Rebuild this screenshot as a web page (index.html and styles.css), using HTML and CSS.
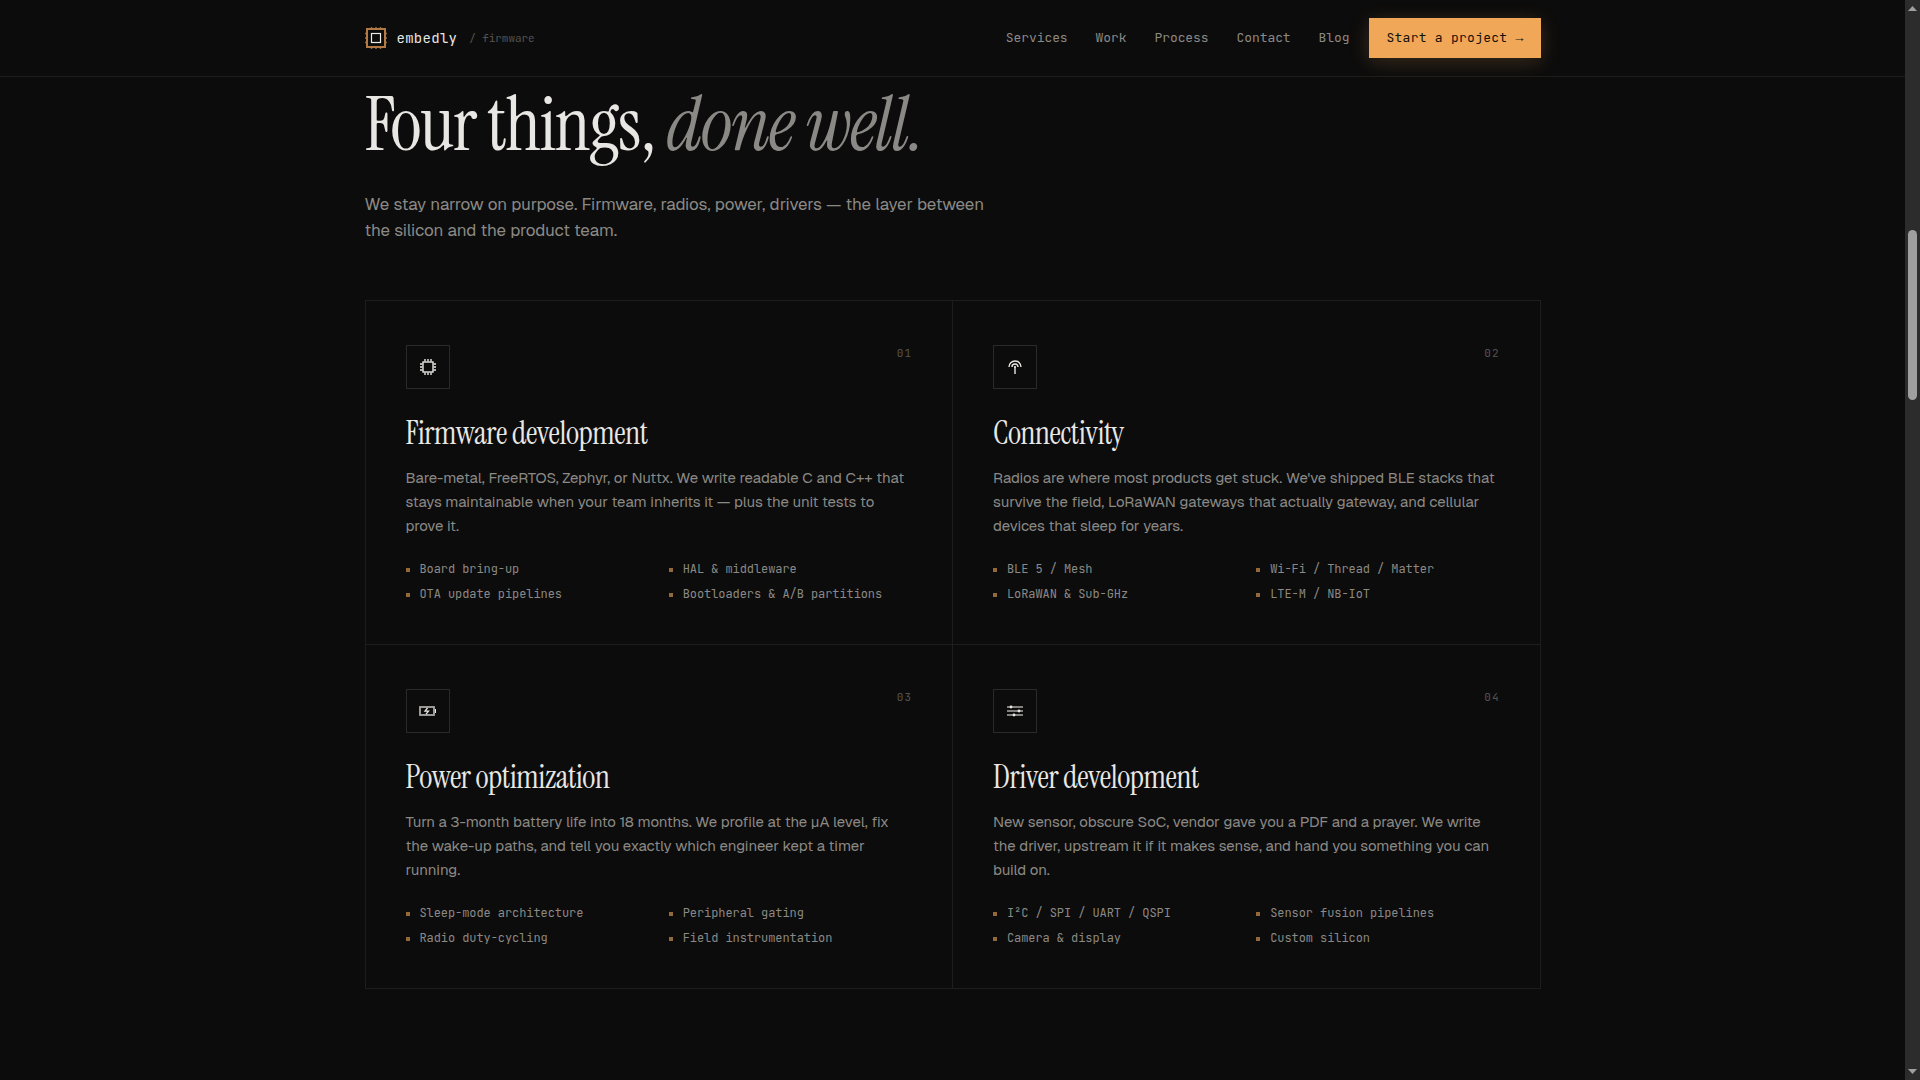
FILE: index.html
```html
<!DOCTYPE html>
<html lang="en">
<head>
  <meta charset="utf-8">
  <meta name="viewport" content="width=device-width, initial-scale=1">
  <title>embedly / firmware</title>
  <link rel="stylesheet" href="styles.css">
</head>
<body>
  <div class="page">
    <header class="topbar">
      <div class="wrap topbar-row">
        <a class="brand" href="#top">
          <svg class="brand-mark" viewBox="0 0 22 22" fill="none" aria-hidden="true">
            <rect x="2" y="2" width="18" height="18" stroke="#b47a45" stroke-width="2"/>
            <rect x="6.500" y="6.500" width="9" height="9" stroke="#ecebe8" stroke-width="1.200"/>
            <path d="M6.500 0v1M11 0v1M15.500 0v1M6.500 21v1M11 21v1M15.500 21v1M0 6.500h1M0 11h1M0 15.500h1M21 6.500h1M21 11h1M21 15.500h1" stroke="#8d6a48" stroke-width="1.500"/>
          </svg>
          <span class="brand-name">embedly</span>
          <span class="brand-sub">/ firmware</span>
        </a>
        <div class="topbar-end">
          <nav class="nav" aria-label="Main">
            <a href="#services">Services</a>
            <a href="#work">Work</a>
            <a href="#process">Process</a>
            <a href="#contact">Contact</a>
            <a href="#blog">Blog</a>
          </nav>
          <button class="cta" type="button">Start a project <span class="arrow">→</span></button>
        </div>
      </div>
    </header>

    <main class="wrap services" id="services">
      <h2 class="headline">Four things, <em>done well.</em></h2>
      <p class="lead">We stay narrow on purpose. Firmware, radios, power, drivers — the layer between the silicon and the product team.</p>

      <div class="grid">
        <article class="card">
          <div class="card-top">
            <span class="icon">
              <svg viewBox="0 0 18 18" fill="none" stroke="currentColor" aria-hidden="true">
                <rect x="4" y="4" width="10" height="10" stroke-width="1.400"/>
                <path d="M6 1v2.500M9 1v2.500M12 1v2.500M6 14.500V17M9 14.500V17M12 14.500V17M1 6h2.500M1 9h2.500M1 12h2.500M14.500 6H17M14.500 9H17M14.500 12H17" stroke-width="1.400"/>
              </svg>
            </span>
            <span class="num">01</span>
          </div>
          <h3>Firmware development</h3>
          <p>Bare-metal, FreeRTOS, Zephyr, or Nuttx. We write readable C and C++ that stays maintainable when your team inherits it — plus the unit tests to prove it.</p>
          <ul>
            <li>Board bring-up</li>
            <li>HAL &amp; middleware</li>
            <li>OTA update pipelines</li>
            <li>Bootloaders &amp; A/B partitions</li>
          </ul>
        </article>

        <article class="card">
          <div class="card-top">
            <span class="icon">
              <svg viewBox="0 0 18 18" fill="none" stroke="currentColor" aria-hidden="true">
                <path d="M3 9a6 6 0 0 1 12 0M6 9a3 3 0 0 1 6 0" stroke-width="1.400"/>
                <path d="M9 8.500V16" stroke-width="1.400"/>
                <circle cx="9" cy="9" r="1" fill="currentColor" stroke="none"/>
              </svg>
            </span>
            <span class="num">02</span>
          </div>
          <h3>Connectivity</h3>
          <p>Radios are where most products get stuck. We've shipped BLE stacks that survive the field, LoRaWAN gateways that actually gateway, and cellular devices that sleep for years.</p>
          <ul>
            <li>BLE 5 / Mesh</li>
            <li>Wi-Fi / Thread / Matter</li>
            <li>LoRaWAN &amp; Sub-GHz</li>
            <li>LTE-M / NB-IoT</li>
          </ul>
        </article>

        <article class="card">
          <div class="card-top">
            <span class="icon">
              <svg viewBox="0 0 18 18" fill="none" aria-hidden="true">
                <rect x="1" y="5" width="14" height="8" stroke="#a9a8a6" stroke-width="1.800"/>
                <path d="M16 7h1v4h-1z" fill="currentColor"/>
                <path d="M8.500 6L6 9.200H9.500L7 12.200" stroke="currentColor" stroke-width="1.300"/>
              </svg>
            </span>
            <span class="num">03</span>
          </div>
          <h3>Power optimization</h3>
          <p>Turn a 3-month battery life into 18 months. We profile at the µA level, fix the wake-up paths, and tell you exactly which engineer kept a timer running.</p>
          <ul>
            <li>Sleep-mode architecture</li>
            <li>Peripheral gating</li>
            <li>Radio duty-cycling</li>
            <li>Field instrumentation</li>
          </ul>
        </article>

        <article class="card">
          <div class="card-top">
            <span class="icon">
              <svg viewBox="0 0 18 18" fill="none" aria-hidden="true">
                <path d="M1 5h16M1 9h16M1 13h16" stroke="#a9a8a6" stroke-width="1.600"/>
                <circle cx="5" cy="5" r="1.400" fill="currentColor"/>
                <circle cx="13" cy="9" r="1.400" fill="currentColor"/>
                <circle cx="8" cy="13" r="1.400" fill="currentColor"/>
              </svg>
            </span>
            <span class="num">04</span>
          </div>
          <h3>Driver development</h3>
          <p>New sensor, obscure SoC, vendor gave you a PDF and a prayer. We write the driver, upstream it if it makes sense, and hand you something you can build on.</p>
          <ul>
            <li>I²C / SPI / UART / QSPI</li>
            <li>Sensor fusion pipelines</li>
            <li>Camera &amp; display</li>
            <li>Custom silicon</li>
          </ul>
        </article>
      </div>
    </main>
  </div>

  <div class="scrollbar" aria-hidden="true">
    <svg viewBox="0 0 9 5"><path d="M4.500 0L9 5H0z" fill="#a0a0a0"/></svg>
    <div class="track"><div class="thumb"></div></div>
    <svg viewBox="0 0 9 5"><path d="M0 0h9L4.500 5z" fill="#a0a0a0"/></svg>
  </div>
</body>
</html>
```
FILE: styles.css
```css
:root {
  --bg: #0c0c0c;
  --line: #1d1d1d;
  --line-strong: #2a2a2a;
  --text: #e8e7e4;
  --muted: #8b8985;
  --faint: #555452;
  --amber: #f0a858;
  --serif: "Instrument Serif", "Liberation Serif", serif;
  --sans: "Geist", "Inter", sans-serif;
  --mono: "JetBrains Mono", "Liberation Mono", monospace;
}

* {
  box-sizing: border-box;
}

body {
  margin: 0;
  display: grid;
  grid-template-columns: minmax(0, 1fr) 15px;
  min-height: 100vh;
  background: var(--bg);
  color: var(--text);
  font-family: var(--sans);
  letter-spacing: -0.005em;
}

.wrap {
  width: 100%;
  max-width: 1240px;
  margin: 0 auto;
  padding: 0 32px;
}

a {
  color: inherit;
  text-decoration: none;
}

/* Header */
.topbar {
  position: sticky;
  top: 0;
  background: var(--bg);
  border-bottom: 1px solid var(--line);
}

.topbar-row,
.topbar-end,
.nav,
.brand {
  display: flex;
  align-items: center;
}

.topbar-row {
  justify-content: space-between;
  min-height: 76px;
}

.brand {
  font-family: var(--mono);
}

.brand-mark {
  width: 22px;
  height: 22px;
}

.brand-name {
  margin: 0 12px 0 10px;
  font-size: 14px;
  line-height: 20px;
  letter-spacing: 0.02em;
}

.brand-sub {
  font-size: 11px;
  line-height: 20px;
  color: var(--faint);
}

.topbar-end {
  gap: 20px;
}

.nav {
  gap: 28px;
  font-family: var(--mono);
  font-size: 13px;
  line-height: 20px;
  color: var(--muted);
}

.cta {
  height: 40px;
  padding: 0 17px;
  border: 0;
  background: var(--amber);
  color: #14100a;
  font-family: var(--mono);
  font-size: 13px;
  line-height: 20px;
  letter-spacing: 0.02em;
  box-shadow: 0 4px 20px rgba(240, 168, 88, 0.2);
  cursor: pointer;
}

.arrow {
  font-family: "Liberation Mono", monospace;
}

/* Services */
.services {
  padding-top: 12px;
  padding-bottom: 80px;
}

.headline {
  margin: 0;
  font-family: var(--serif);
  font-size: 76px;
  font-weight: 400;
  line-height: 72px;
  letter-spacing: -0.02em;
}

.headline em {
  color: var(--muted);
}

.lead {
  max-width: 640px;
  margin: 30px 0 57px;
  font-size: 17px;
  line-height: 26px;
  color: var(--muted);
}

.grid {
  display: grid;
  grid-template-columns: repeat(2, minmax(0, 1fr));
  gap: 1px;
  border: 1px solid var(--line);
  background: var(--line);
}

.card {
  padding: 44px 40px 41px;
  background: var(--bg);
}

.card-top {
  display: flex;
  justify-content: space-between;
  align-items: flex-start;
}

.icon {
  display: grid;
  place-items: center;
  width: 44px;
  height: 44px;
  border: 1px solid var(--line-strong);
}

.icon svg {
  width: 18px;
  height: 18px;
}

.num {
  font-family: var(--mono);
  font-size: 11px;
  line-height: 17px;
  letter-spacing: 1px;
  color: var(--faint);
}

.card h3 {
  margin: 28px 0 17px;
  font-family: var(--serif);
  font-size: 32px;
  font-weight: 400;
  line-height: 32px;
  letter-spacing: -0.015em;
}

.card p {
  margin: 0 0 23px;
  font-size: 15px;
  line-height: 24px;
  color: var(--muted);
}

.card ul {
  display: grid;
  grid-template-columns: repeat(2, minmax(0, 1fr));
  gap: 8px 20px;
  margin: 0;
  padding: 0;
  list-style: none;
  font-family: var(--mono);
  font-size: 12px;
  line-height: 17px;
  color: var(--muted);
}

.card li {
  display: flex;
  align-items: center;
  gap: 10px;
}

.card li::before {
  content: "";
  flex: none;
  width: 4px;
  height: 4px;
  background: var(--amber);
  opacity: 0.6;
}

/* Scroll rail */
.scrollbar {
  position: sticky;
  top: 0;
  display: flex;
  flex-direction: column;
  align-items: center;
  height: 100vh;
  padding: 6px 0;
  background: #2c2c2c;
}

.scrollbar svg {
  width: 9px;
  height: 5px;
}

.track {
  flex: 1;
  padding-top: 219px;
}

.thumb {
  width: 9px;
  height: 170px;
  border-radius: 5px;
  background: #9f9f9f;
}
```
